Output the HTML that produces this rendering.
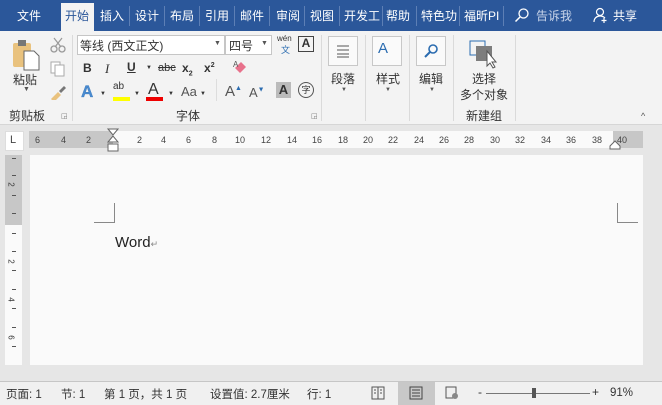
<!DOCTYPE html><html><head><meta charset="utf-8"><style>
*{margin:0;padding:0;box-sizing:border-box}
body{width:662px;height:405px;overflow:hidden;background:#e6e6e6;font-family:"Liberation Sans","Noto Sans CJK SC",sans-serif;position:relative;font-size:12px;color:#333}
.a{position:absolute;white-space:nowrap}
#top{position:absolute;left:0;top:0;width:662px;height:31px;background:#2b579a}
.t{position:absolute;top:7px;color:#fff;font-size:12px}
.sep{position:absolute;top:6px;width:1px;height:20px;background:#5d7fb5}
#rib{position:absolute;left:0;top:31px;width:662px;height:94px;background:#f3f3f3;border-bottom:1px solid #d6d6d6}
.vs{position:absolute;top:4px;width:1px;height:86px;background:#dadada}
.btn{position:absolute;width:30px;height:30px;border:1px solid #c8c8c8;background:#fafafa}
.g{font-size:12px;color:#333}
.rn{position:absolute;top:135px;font-size:9px;color:#444}
</style></head><body>
<div id="top">
<span class="t" style="left:17px">文件</span>
<div class="a" style="left:61px;top:3px;width:33px;height:28px;background:#f3f3f3"></div>
<span class="t" style="left:65px;color:#2b579a">开始</span>
<span class="t" style="left:100px">插入</span><div class="sep" style="left:129px"></div>
<span class="t" style="left:135px">设计</span><div class="sep" style="left:164px"></div>
<span class="t" style="left:170px">布局</span><div class="sep" style="left:199px"></div>
<span class="t" style="left:205px">引用</span><div class="sep" style="left:234px"></div>
<span class="t" style="left:240px">邮件</span><div class="sep" style="left:269px"></div>
<span class="t" style="left:276px">审阅</span><div class="sep" style="left:304px"></div>
<span class="t" style="left:310px">视图</span><div class="sep" style="left:339px"></div>
<span class="t" style="left:344px">开发工</span><div class="sep" style="left:382px"></div>
<span class="t" style="left:386px">帮助</span><div class="sep" style="left:416px"></div>
<span class="t" style="left:421px">特色功</span><div class="sep" style="left:459px"></div>
<span class="t" style="left:464px">福昕PI</span><div class="sep" style="left:503px"></div>
<svg class="a" style="left:514px;top:7px" width="16" height="16"><circle cx="9.5" cy="6.5" r="4.5" fill="none" stroke="#fff" stroke-width="1.3"/><line x1="6" y1="10" x2="1.5" y2="14.5" stroke="#fff" stroke-width="1.5"/></svg>
<span class="t" style="left:536px;color:#c9d5ea">告诉我</span>
<svg class="a" style="left:593px;top:7px" width="16" height="16"><circle cx="7" cy="5" r="3.5" fill="none" stroke="#fff" stroke-width="1.2"/><path d="M1 15c0-4 3-6 6-6s4 1 5 2" fill="none" stroke="#fff" stroke-width="1.2"/><path d="M11 11v5M8.5 13.5h5" stroke="#fff" stroke-width="1.2"/></svg>
<span class="t" style="left:613px">共享</span>
</div>
<div id="rib">
<svg class="a" style="left:11px;top:8px" width="32" height="32"><rect x="2" y="4" width="18" height="24" rx="2" fill="#e9c27e"/><rect x="7" y="1" width="8" height="6" fill="#777"/><path d="M13 12h10l5 5v14H13z" fill="#fff" stroke="#666"/></svg>
<span class="a g" style="left:13px;top:40px">粘贴</span>
<span class="a" style="left:23px;top:55px;font-size:7px;color:#555">▼</span>
<svg class="a" style="left:50px;top:6px" width="16" height="16"><circle cx="4" cy="12" r="3" fill="none" stroke="#999" stroke-width="1.3"/><circle cx="12" cy="12" r="3" fill="none" stroke="#999" stroke-width="1.3"/><path d="M5 10L12 1M11 10L4 1" stroke="#999" stroke-width="1.2"/></svg>
<svg class="a" style="left:50px;top:30px" width="16" height="16"><rect x="1" y="1" width="9" height="11" fill="#fff" stroke="#aaa"/><rect x="5" y="4" width="9" height="11" fill="#fff" stroke="#aaa"/></svg>
<svg class="a" style="left:49px;top:53px" width="18" height="16"><path d="M2 15l7-7 3 3-7 7z" fill="#e9c27e"/><path d="M10 7l5-5 2 2-5 5z" fill="#777"/></svg>
<span class="a g" style="left:9px;top:76px">剪贴板</span>
<span class="a" style="left:61px;top:81px;font-size:7px;color:#777">◲</span>
<div class="vs" style="left:72px"></div>
<div class="a" style="left:77px;top:4px;width:148px;height:20px;border:1px solid #c6c6c6;background:#fff"></div>
<span class="a" style="left:80px;top:6px;font-size:12px;color:#333">等线 (西文正文)</span>
<span class="a" style="left:214px;top:9px;font-size:7px;color:#555">▼</span>
<div class="a" style="left:225px;top:4px;width:47px;height:20px;border:1px solid #c6c6c6;background:#fff"></div>
<span class="a" style="left:229px;top:6px;font-size:12px">四号</span>
<span class="a" style="left:261px;top:9px;font-size:7px;color:#555">▼</span>
<span class="a" style="left:277px;top:3px;font-size:8px;color:#333">wén</span>
<span class="a" style="left:281px;top:12px;font-size:9px;color:#2b6cb0">文</span>
<div class="a" style="left:298px;top:5px;width:16px;height:16px;border:1.5px solid #444;font-size:12px;font-weight:bold;text-align:center;line-height:13px">A</div>
<span class="a" style="left:83px;top:30px;font-weight:bold;font-size:12px">B</span>
<span class="a" style="left:105px;top:30px;font-style:italic;font-family:'Liberation Serif',serif;font-size:13px">I</span>
<span class="a" style="left:127px;top:29px;text-decoration:underline;font-size:12px;font-weight:bold">U</span>
<span class="a" style="left:146px;top:34px;font-size:6px">▼</span>
<span class="a" style="left:158px;top:31px;font-size:11px;text-decoration:line-through">abc</span>
<span class="a" style="left:182px;top:30px;font-weight:bold">x<sub style="font-size:7px">2</sub></span>
<span class="a" style="left:204px;top:30px;font-weight:bold">x<sup style="font-size:7px">2</sup></span>
<svg class="a" style="left:232px;top:28px" width="16" height="16"><path d="M3 9l6-6 5 5-6 6z" fill="#e8718b"/><text x="1" y="8" font-size="8" fill="#555" font-family="Liberation Sans">A</text></svg>
<span class="a" style="left:81px;top:51px;font-size:17px;color:#4a8bd0;font-weight:bold;-webkit-text-stroke:0.3px #2b6cb0">A</span>
<span class="a" style="left:100px;top:60px;font-size:6px">▼</span>
<span class="a" style="left:113px;top:50px;font-size:10px">ab</span>
<div class="a" style="left:113px;top:66px;width:17px;height:4px;background:#ffff00"></div>
<span class="a" style="left:134px;top:60px;font-size:6px">▼</span>
<span class="a" style="left:148px;top:50px;font-size:16px">A</span>
<div class="a" style="left:146px;top:66px;width:17px;height:4px;background:#e00"></div>
<span class="a" style="left:168px;top:60px;font-size:6px">▼</span>
<span class="a" style="left:181px;top:53px;font-size:13px;color:#555">Aa</span>
<span class="a" style="left:200px;top:60px;font-size:6px">▼</span>
<div class="a" style="left:216px;top:48px;width:1px;height:22px;background:#ddd"></div>
<span class="a" style="left:225px;top:52px;font-size:15px;color:#555">A<sup style="font-size:7px;color:#2b6cb0">▲</sup></span>
<span class="a" style="left:249px;top:54px;font-size:13px;color:#555">A<sup style="font-size:7px;color:#2b6cb0">▼</sup></span>
<div class="a" style="left:276px;top:51px;width:15px;height:16px;background:#bbb;font-weight:bold;font-size:13px;text-align:center;line-height:16px;color:#333">A</div>
<div class="a" style="left:298px;top:51px;width:16px;height:16px;border:1px solid #555;border-radius:50%;font-size:9px;text-align:center;line-height:14px">字</div>
<span class="a g" style="left:176px;top:76px">字体</span>
<span class="a" style="left:311px;top:81px;font-size:7px;color:#777">◲</span>
<div class="vs" style="left:321px"></div>
<div class="btn" style="left:328px;top:5px"></div>
<svg class="a" style="left:335px;top:12px" width="16" height="16"><path d="M2 3h12M2 7h12M2 11h12M2 14h12" stroke="#555"/></svg>
<span class="a g" style="left:331px;top:39px">段落</span>
<span class="a" style="left:341px;top:56px;font-size:6px;color:#555">▼</span>
<div class="vs" style="left:365px"></div>
<div class="btn" style="left:372px;top:5px"></div>
<span class="a" style="left:378px;top:9px;font-size:15px;color:#2b6cb0">A</span>
<span class="a g" style="left:376px;top:39px">样式</span>
<span class="a" style="left:385px;top:56px;font-size:6px;color:#555">▼</span>
<div class="vs" style="left:409px"></div>
<div class="btn" style="left:416px;top:5px"></div>
<svg class="a" style="left:422px;top:11px" width="18" height="18"><circle cx="11" cy="7" r="4" fill="none" stroke="#2b6cb0" stroke-width="1.6"/><line x1="8" y1="10" x2="3" y2="15" stroke="#2b6cb0" stroke-width="2"/></svg>
<span class="a g" style="left:419px;top:39px">编辑</span>
<span class="a" style="left:429px;top:56px;font-size:6px;color:#555">▼</span>
<div class="vs" style="left:453px"></div>
<svg class="a" style="left:469px;top:8px" width="34" height="30"><rect x="1" y="2" width="15" height="14" fill="none" stroke="#2b6cb0"/><rect x="7" y="7" width="16" height="15" fill="#7d7d7d"/><path d="M18 12v15l3-3 3 5 2-1-3-5h4z" fill="#fff" stroke="#555"/></svg>
<span class="a g" style="left:472px;top:39px">选择</span>
<span class="a g" style="left:460px;top:55px">多个对象</span>
<span class="a g" style="left:466px;top:76px">新建组</span>
<div class="vs" style="left:515px"></div>
<span class="a" style="left:641px;top:80px;font-size:9px;color:#555">^</span>
</div>
<div class="a" style="left:5px;top:131px;width:19px;height:20px;background:#fff;border:1px solid #ddd"></div>
<span class="a" style="left:10px;top:134px;font-size:11px;color:#444">L</span>
<div class="a" style="left:29px;top:131px;width:84px;height:17px;background:#c7c7c7"></div>
<div class="a" style="left:113px;top:131px;width:500px;height:17px;background:#fafafa"></div>
<div class="a" style="left:613px;top:131px;width:30px;height:17px;background:#c7c7c7"></div>
<span class="rn" style="left:35px">6</span><span class="rn" style="left:61px">4</span><span class="rn" style="left:86px">2</span>
<span class="rn" style="left:137px">2</span><span class="rn" style="left:161px">4</span><span class="rn" style="left:186px">6</span><span class="rn" style="left:212px">8</span>
<span class="rn" style="left:235px">10</span><span class="rn" style="left:261px">12</span><span class="rn" style="left:287px">14</span><span class="rn" style="left:312px">16</span><span class="rn" style="left:338px">18</span><span class="rn" style="left:363px">20</span><span class="rn" style="left:388px">22</span><span class="rn" style="left:414px">24</span><span class="rn" style="left:439px">26</span><span class="rn" style="left:464px">28</span><span class="rn" style="left:490px">30</span><span class="rn" style="left:515px">32</span><span class="rn" style="left:541px">34</span><span class="rn" style="left:566px">36</span><span class="rn" style="left:592px">38</span><span class="rn" style="left:617px">40</span>
<svg class="a" style="left:107px;top:128px" width="12" height="27"><path d="M1 1h10L6 7z M1 14h10L6 8z" fill="#fff" stroke="#666"/><rect x="1" y="16" width="10" height="7" fill="#fff" stroke="#666"/></svg>
<svg class="a" style="left:609px;top:140px" width="12" height="10"><path d="M1 9h10V6L6 1 1 6z" fill="#fff" stroke="#666"/></svg>
<div class="a" style="left:5px;top:155px;width:17px;height:70px;background:#c7c7c7"></div>
<div class="a" style="left:5px;top:225px;width:17px;height:140px;background:#fafafa"></div>
<div class="a" style="left:12px;top:158px;width:4px;height:1px;background:#555"></div>
<div class="a" style="left:12px;top:175px;width:4px;height:1px;background:#555"></div>
<span class="a" style="left:9px;top:180px;font-size:8px;transform:rotate(90deg)">2</span>
<div class="a" style="left:12px;top:195px;width:4px;height:1px;background:#555"></div>
<div class="a" style="left:12px;top:213px;width:4px;height:1px;background:#555"></div>
<div class="a" style="left:12px;top:233px;width:4px;height:1px;background:#555"></div>
<div class="a" style="left:12px;top:251px;width:4px;height:1px;background:#555"></div>
<span class="a" style="left:9px;top:257px;font-size:8px;transform:rotate(90deg)">2</span>
<div class="a" style="left:12px;top:270px;width:4px;height:1px;background:#555"></div>
<div class="a" style="left:12px;top:289px;width:4px;height:1px;background:#555"></div>
<span class="a" style="left:9px;top:295px;font-size:8px;transform:rotate(90deg)">4</span>
<div class="a" style="left:12px;top:308px;width:4px;height:1px;background:#555"></div>
<div class="a" style="left:12px;top:327px;width:4px;height:1px;background:#555"></div>
<span class="a" style="left:9px;top:333px;font-size:8px;transform:rotate(90deg)">6</span>
<div class="a" style="left:12px;top:346px;width:4px;height:1px;background:#555"></div>
<div class="a" style="left:30px;top:155px;width:613px;height:210px;background:#fafafa"></div>
<div class="a" style="left:94px;top:203px;width:21px;height:20px;border-right:1px solid #888;border-bottom:1px solid #888"></div>
<div class="a" style="left:617px;top:203px;width:21px;height:20px;border-left:1px solid #888;border-bottom:1px solid #888"></div>
<span class="a" style="left:115px;top:234px;font-size:15px;color:#222">Word<span style="font-size:9px;color:#888">↵</span></span>
<div class="a" style="left:0;top:381px;width:662px;height:24px;background:#f0f0f0;border-top:1px solid #c6c6c6"></div>
<span class="a" style="left:6px;top:386px;font-size:11.5px">页面: 1</span>
<span class="a" style="left:61px;top:386px;font-size:11.5px">节: 1</span>
<span class="a" style="left:104px;top:386px;font-size:11.5px">第 1 页，共 1 页</span>
<span class="a" style="left:210px;top:386px;font-size:11.5px">设置值: 2.7厘米</span>
<span class="a" style="left:307px;top:386px;font-size:11.5px">行: 1</span>
<svg class="a" style="left:371px;top:386px" width="14" height="14"><rect x="1" y="1" width="12" height="12" fill="none" stroke="#555"/><path d="M7 1v12M3 4h2M3 7h2M9 4h2M9 7h2" stroke="#555"/></svg>
<div class="a" style="left:398px;top:382px;width:37px;height:23px;background:#c8c8c8"></div>
<svg class="a" style="left:409px;top:386px" width="14" height="14"><rect x="1" y="1" width="12" height="12" fill="none" stroke="#444"/><path d="M3 4h8M3 7h8M3 10h8" stroke="#444"/></svg>
<svg class="a" style="left:445px;top:386px" width="14" height="14"><rect x="1" y="1" width="10" height="11" fill="none" stroke="#555"/><circle cx="10" cy="10" r="3" fill="#888"/></svg>
<span class="a" style="left:478px;top:385px;font-size:12px">-</span>
<div class="a" style="left:486px;top:393px;width:104px;height:1px;background:#777"></div>
<div class="a" style="left:532px;top:388px;width:4px;height:10px;background:#555"></div>
<span class="a" style="left:592px;top:385px;font-size:12px">+</span>
<span class="a" style="left:610px;top:387px;font-size:11.5px">91%</span>
</body></html>
